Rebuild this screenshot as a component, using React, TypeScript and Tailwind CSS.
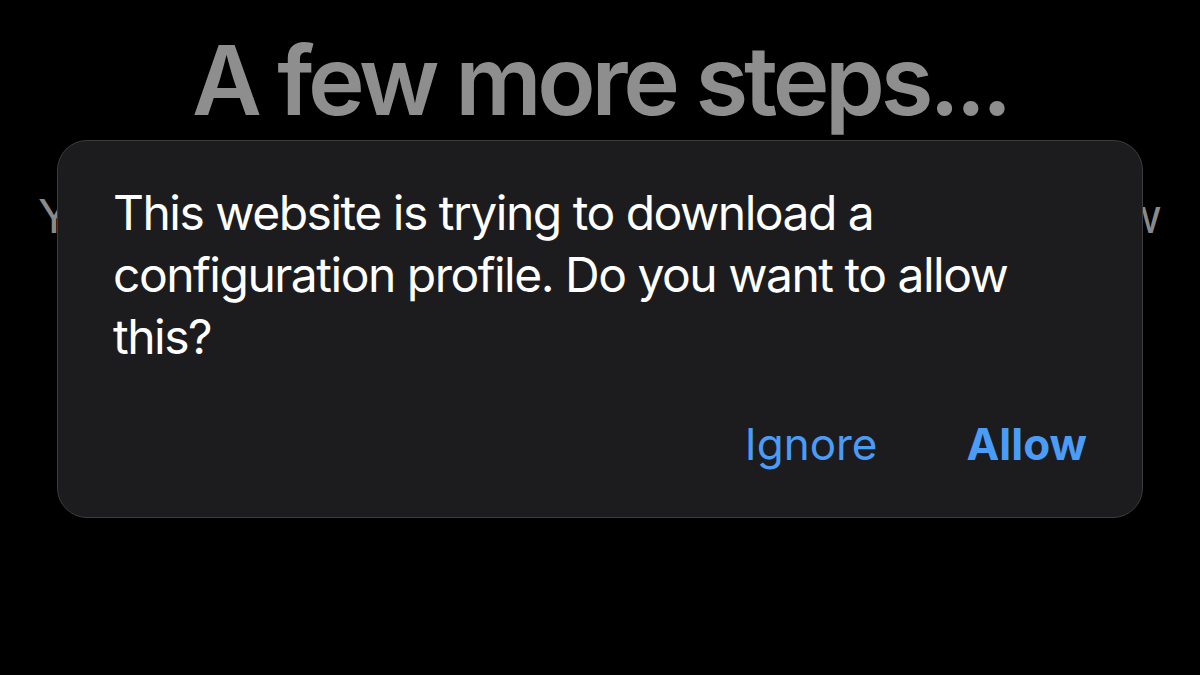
export default function App() {
  return (
    <div
      className="relative h-[675px] w-[1200px] overflow-hidden bg-black"
      style={{ fontFamily: "Inter, 'Noto Sans', 'Liberation Sans', sans-serif" }}
    >
      {/* Page underneath the alert */}
      <div className="flex flex-col items-center pt-[22px]">
        <h1 className="text-[96px] font-semibold leading-[116px] tracking-[-4.3px] text-[#8e8e8e]">
          A few more steps...
        </h1>
        <p className="mt-[50px] w-[1124px] whitespace-nowrap text-[47px] leading-[56px] text-[#8a8a8a] [text-align-last:justify]">
          You need to install a profile to allow
        </p>
      </div>

      {/* Alert */}
      <div className="absolute left-[57px] top-[140px] flex h-[378px] w-[1086px] flex-col rounded-[30px] border border-[#3c3c3e] bg-[#1c1c1e] px-[55px] pt-[41px]">
        <p className="text-[48px] leading-[62px] tracking-[-1.5px] text-white">
          This website is trying to download a
          <br />
          configuration profile. Do you want to allow
          <br />
          this?
        </p>
        <div className="mt-[50px] flex justify-end gap-[89px] text-[44px] leading-[52px] text-[#4a9cf7]">
          <span>Ignore</span>
          <span className="font-bold">Allow</span>
        </div>
      </div>
    </div>
  );
}
